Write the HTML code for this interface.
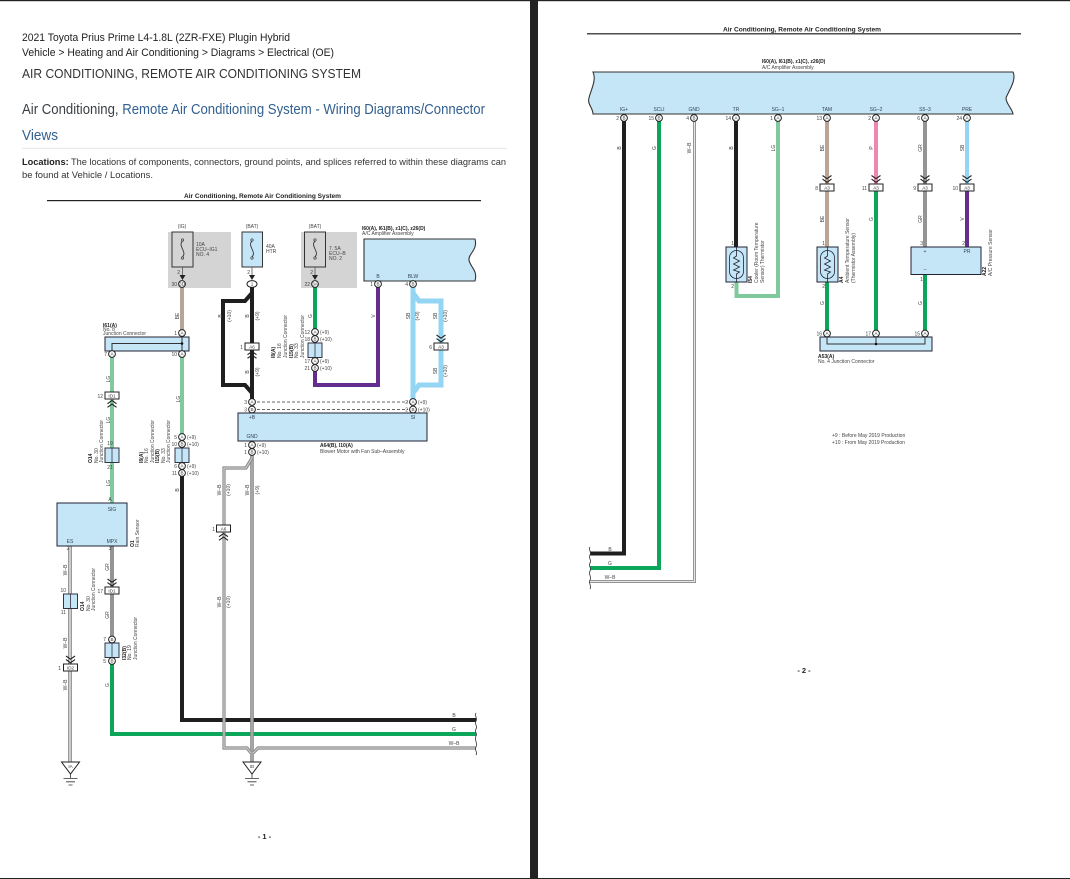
<!DOCTYPE html>
<html><head><meta charset="utf-8"><style>
html,body{margin:0;padding:0;background:#fff;width:1070px;height:879px;overflow:hidden}
svg{display:block;filter:blur(.3px)}
text{font-family:"Liberation Sans",sans-serif;fill:#444;font-size:5px}
.b{font-weight:bold;fill:#222}
.m{text-anchor:middle}
.e{text-anchor:end}
.h{fill:#222}
.w{fill:none;stroke-width:4;stroke-linejoin:miter}
.p{font-size:4.6px;text-anchor:middle;fill:#333}
.ln{fill:none;stroke:#333;stroke-width:1}
</style></head><body>
<svg width="1070" height="879" viewBox="0 0 1070 879" xmlns="http://www.w3.org/2000/svg">
<defs>
<g id="pin"><circle r="3.4" fill="#fff" stroke="#222" stroke-width="1"/></g>
<g id="cd"><path d="M-4.5,0 L0,3.2 L4.5,0 M-4.5,3.6 L0,6.8 L4.5,3.6" fill="none" stroke="#222" stroke-width="1.1"/></g>
<g id="cu"><path d="M-4.5,6.8 L0,3.6 L4.5,6.8 M-4.5,3.2 L0,0 L4.5,3.2" fill="none" stroke="#222" stroke-width="1.1"/></g>
<g id="con"><rect x="-7" y="0" width="14" height="7" fill="#fff" stroke="#222" stroke-width="1"/></g>
<g id="jbox"><rect x="-7" y="0" width="14" height="14.5" fill="#c5e6f7" stroke="#334" stroke-width="1"/><path d="M0,0V14.5" stroke="#334" stroke-width=".8"/></g>
<g id="fuse"><circle cx="0" cy="8" r="1.2" fill="none" stroke="#333" stroke-width=".7"/><circle cx="0" cy="26" r="1.2" fill="none" stroke="#333" stroke-width=".7"/><path d="M0,9 C-5,14 5,20 0,25" fill="none" stroke="#333" stroke-width=".9"/></g>
<g id="arr"><path d="M-3,0 H3 L0,5 Z" fill="#222"/></g>
<g id="gnd"><path d="M-9,0 H9 L0,12 Z" fill="#fff" stroke="#222" stroke-width="1"/><path d="M0,12V16M-7,16.5H7M-4.5,19.8H4.5M-2,23H2" fill="none" stroke="#333" stroke-width=".8"/></g>
<g id="therm"><rect x="-10.5" y="0" width="21" height="35" fill="#c5e6f7" stroke="#223" stroke-width="1"/><rect x="-7" y="3.5" width="14" height="28" rx="7" fill="none" stroke="#223" stroke-width=".8"/><path d="M0,0V9L-3,11L3,14L-3,17L3,20L-3,23L3,25L0,27V35" fill="none" stroke="#223" stroke-width=".8"/></g>
</defs>

<rect width="1070" height="879" fill="#fff"/>
<rect x="0" y="0" width="1070" height="1.2" fill="#222"/>
<rect x="530" y="0" width="8" height="879" fill="#222"/>
<rect x="0" y="878" width="1070" height="1" fill="#222"/>

<!-- header text -->
<text x="22" y="41" class="h" style="font-size:11px" textLength="268" lengthAdjust="spacingAndGlyphs">2021 Toyota Prius Prime L4-1.8L (2ZR-FXE) Plugin Hybrid</text>
<text x="22" y="56" class="h" style="font-size:11px" textLength="312" lengthAdjust="spacingAndGlyphs">Vehicle &gt; Heating and Air Conditioning &gt; Diagrams &gt; Electrical (OE)</text>
<text x="22" y="78" style="font-size:13px;fill:#333" textLength="339" lengthAdjust="spacingAndGlyphs">AIR CONDITIONING, REMOTE AIR CONDITIONING SYSTEM</text>
<text x="22" y="114" style="font-size:14.5px;fill:#3a3f45" textLength="463" lengthAdjust="spacingAndGlyphs">Air Conditioning,<tspan style="fill:#33608f"> Remote Air Conditioning System - Wiring Diagrams/Connector</tspan></text>
<text x="22" y="140" style="font-size:14.5px;fill:#33608f" textLength="36" lengthAdjust="spacingAndGlyphs">Views</text>
<rect x="22" y="147.8" width="485" height="1" fill="#e4e4e4"/>
<text x="22" y="165" style="font-size:9.5px;fill:#333" textLength="484" lengthAdjust="spacingAndGlyphs"><tspan class="b">Locations:</tspan> The locations of components, connectors, ground points, and splices referred to within these diagrams can</text>
<text x="22" y="178" style="font-size:9.5px;fill:#333" textLength="131" lengthAdjust="spacingAndGlyphs">be found at Vehicle / Locations.</text>
<text x="184" y="198" class="b" style="font-size:6.5px" textLength="157" lengthAdjust="spacingAndGlyphs">Air Conditioning, Remote Air Conditioning System</text>
<rect x="47" y="200" width="434" height="1.2" fill="#222"/>

<!-- PAGE 1 DIAGRAM -->
<rect x="168" y="232" width="63" height="56" fill="#d4d4d4"/>
<rect x="301" y="232" width="56" height="56" fill="#d4d4d4"/>
<rect x="172" y="232" width="21" height="35" fill="#d4d4d4" stroke="#333" stroke-width="1"/>
<rect x="242" y="232" width="20.5" height="35" fill="#c5e6f7" stroke="#333" stroke-width="1"/>
<rect x="304.5" y="232" width="21" height="35" fill="#d4d4d4" stroke="#333" stroke-width="1"/>
<use href="#fuse" x="182.5" y="232"/><use href="#fuse" x="252" y="232"/><use href="#fuse" x="315" y="232"/>
<path d="M182.5,267V277M252,267V277M315,267V277" stroke="#555" stroke-width=".8"/>
<use href="#arr" x="182.5" y="275"/><use href="#arr" x="252" y="275"/><use href="#arr" x="315" y="275"/>
<text x="182" y="228" class="m">(IG)</text><text x="252" y="228" class="m">(BAT)</text><text x="315" y="228" class="m">(BAT)</text>
<text x="196" y="246">10A</text><text x="196" y="251">ECU–IG1</text><text x="196" y="256">NO. 4</text>
<text x="266" y="248">40A</text><text x="266" y="253">HTR</text>
<text x="329" y="250">7. 5A</text><text x="329" y="255">ECU–B</text><text x="329" y="260">NO. 2</text>
<text x="180" y="274" class="e">2</text><text x="250" y="274" class="e">2</text><text x="313" y="274" class="e">2</text>

<text x="362" y="230" class="b">I60(A), I61(B), z1(C), z26(D)</text>
<text x="362" y="235">A/C Amplifier Assembly</text>
<path d="M364,239H475C478,250 468,254 469,260C470,267 478,270 475,281H364Z" fill="#c5e6f7" stroke="#333" stroke-width="1.1"/>
<text x="378" y="278" class="m" style="fill:#345">B</text><text x="413" y="278" class="m" style="fill:#345">BLW</text>

<!-- wires page 1 -->
<path d="M182,287V333" class="w" stroke="#b8a596"/>
<path d="M182,357V437" class="w" stroke="#7fc99c"/>
<path d="M112,357V503" class="w" stroke="#7fc99c"/>
<path d="M112,546V640" class="w" stroke="#949494"/>
<path d="M182,476V720H476" class="w" stroke="#1f1f1f"/>
<path d="M112,663V734H476" class="w" stroke="#0ca65a"/>
<path d="M252,287V400" class="w" stroke="#1f1f1f"/>
<path d="M252,293L245,301H223V385H245L252,393" class="w" stroke="#1f1f1f"/>
<path d="M315,287V331" class="w" stroke="#0ca65a"/>
<path d="M315,371V385H378V287" class="w" stroke="#652d90"/>
<path d="M413,287V400" class="w" style="stroke-width:5" stroke="#93d5f2"/>
<path d="M413,293L419,301H441V385H419L413,393" class="w" style="stroke-width:5" stroke="#93d5f2"/>

<!-- W-B wires -->
<path d="M70,546V764" fill="none" stroke="#333" stroke-width="3"/><path d="M70,546V764" fill="none" stroke="#fff" stroke-width="1.5"/>
<path d="M252,446V762" fill="none" stroke="#888" stroke-width="3.6"/><path d="M252,446V762" fill="none" stroke="#bbb" stroke-width="1.2"/>
<path d="M252,458L246,468H224V748H247L251,753M476,748H258L253,753" fill="none" stroke="#888" stroke-width="3.2"/><path d="M252,458L246,468H224V748H247L251,753M476,748H258L253,753" fill="none" stroke="#ccc" stroke-width="1.2"/>

<!-- dashed -->
<path d="M257,402H408" stroke="#333" stroke-width=".8" stroke-dasharray="3 2"/>
<path d="M257,409.5H408" stroke="#333" stroke-width=".8" stroke-dasharray="3 2"/>

<!-- boxes page 1 -->
<rect x="105" y="337" width="84" height="14" fill="#c5e6f7" stroke="#223" stroke-width="1"/>
<path d="M112,351V343.5H182" class="ln"/><path d="M182,337V351" class="ln"/><circle cx="182" cy="343.5" r="1.3" fill="#111"/>
<rect x="238" y="413" width="189" height="28" fill="#c5e6f7" stroke="#223" stroke-width="1"/>
<rect x="57" y="503" width="70" height="43" fill="#c5e6f7" stroke="#223" stroke-width="1"/>
<text x="252" y="419" class="m" style="fill:#345">+B</text><text x="413" y="419" class="m" style="fill:#345">SI</text><text x="252" y="438" class="m" style="fill:#345">GND</text>
<text x="112" y="511" class="m" style="fill:#345">SIG</text><text x="70" y="543" class="m" style="fill:#345">ES</text><text x="112" y="543" class="m" style="fill:#345">MPX</text>

<use href="#jbox" x="182" y="448"/><use href="#jbox" x="112" y="448"/><use href="#jbox" x="315" y="343"/><use href="#jbox" x="70.5" y="594"/><use href="#jbox" x="112" y="643"/>

<use href="#con" x="112" y="392"/><use href="#cu" x="112" y="400.5"/><text x="112" y="397.7" class="p">ID1</text><text x="103" y="398" class="e">12</text>
<use href="#con" x="112" y="587"/><use href="#cd" x="112" y="579"/><text x="112" y="592.7" class="p">ID1</text><text x="103" y="593" class="e">17</text>
<use href="#con" x="70.5" y="664"/><use href="#cd" x="70.5" y="656"/><text x="70.5" y="669.7" class="p">ID2</text><text x="61" y="670" class="e">1</text>
<use href="#con" x="252" y="343"/><use href="#cu" x="252" y="351.5"/><text x="252" y="348.7" class="p">A6</text><text x="243" y="349" class="e">1</text>
<use href="#con" x="223.5" y="525"/><use href="#cu" x="223.5" y="533.5"/><text x="223.5" y="530.7" class="p">A6</text><text x="215" y="531" class="e">1</text>
<use href="#con" x="441" y="343"/><use href="#cd" x="441" y="335"/><text x="441" y="348.7" class="p">A3</text><text x="432" y="349" class="e">6</text>

<!-- pins page 1 -->
<use href="#pin" x="182" y="284"/><text x="182" y="285.7" class="p">3D</text><text x="177" y="286" class="e">30</text>
<ellipse cx="252" cy="284" rx="5" ry="3.4" fill="#fff" stroke="#222"/><text x="252" y="285.7" class="p">1</text>
<use href="#pin" x="315" y="284"/><text x="315" y="285.7" class="p">3A</text><text x="310" y="286" class="e">22</text>
<use href="#pin" x="378" y="284"/><text x="378" y="285.7" class="p">B</text><text x="373" y="286" class="e">1</text>
<use href="#pin" x="413" y="284"/><text x="413" y="285.7" class="p">B</text><text x="408" y="286" class="e">4</text>
<use href="#pin" x="182" y="333"/><text x="182" y="334.7" class="p">A</text><text x="177" y="335" class="e">1</text>
<use href="#pin" x="112" y="354"/><text x="112" y="355.7" class="p">A</text><text x="107" y="356" class="e">7</text>
<use href="#pin" x="182" y="354"/><text x="182" y="355.7" class="p">A</text><text x="177" y="356" class="e">10</text>
<use href="#pin" x="182" y="437"/><text x="182" y="438.7" class="p">A</text><text x="177" y="439" class="e">5</text><text x="187" y="439">(+9)</text>
<use href="#pin" x="182" y="444"/><text x="182" y="445.7" class="p">B</text><text x="177" y="446" class="e">10</text><text x="187" y="446">(+10)</text>
<use href="#pin" x="182" y="466"/><text x="182" y="467.7" class="p">A</text><text x="177" y="468" class="e">6</text><text x="187" y="468">(+9)</text>
<use href="#pin" x="182" y="473"/><text x="182" y="474.7" class="p">B</text><text x="177" y="475" class="e">11</text><text x="187" y="475">(+10)</text>
<use href="#pin" x="315" y="332"/><text x="315" y="333.7" class="p">A</text><text x="310" y="334" class="e">12</text><text x="320" y="334">(+9)</text>
<use href="#pin" x="315" y="339"/><text x="315" y="340.7" class="p">B</text><text x="310" y="341" class="e">18</text><text x="320" y="341">(+10)</text>
<use href="#pin" x="315" y="361"/><text x="315" y="362.7" class="p">A</text><text x="310" y="363" class="e">17</text><text x="320" y="363">(+9)</text>
<use href="#pin" x="315" y="368"/><text x="315" y="369.7" class="p">B</text><text x="310" y="370" class="e">21</text><text x="320" y="370">(+10)</text>
<use href="#pin" x="252" y="402"/><text x="252" y="403.7" class="p">A</text><text x="247" y="404" class="e">3</text>
<use href="#pin" x="252" y="409.5"/><text x="252" y="411.2" class="p">B</text><text x="247" y="411.5" class="e">3</text>
<use href="#pin" x="413" y="402"/><text x="413" y="403.7" class="p">A</text><text x="408" y="404" class="e">2</text><text x="418" y="404">(+9)</text>
<use href="#pin" x="413" y="409.5"/><text x="413" y="411.2" class="p">B</text><text x="408" y="411.5" class="e">2</text><text x="418" y="411.5">(+10)</text>
<use href="#pin" x="252" y="445"/><text x="252" y="446.7" class="p">A</text><text x="247" y="447" class="e">1</text><text x="257" y="447">(+9)</text>
<use href="#pin" x="252" y="452"/><text x="252" y="453.7" class="p">B</text><text x="247" y="454" class="e">1</text><text x="257" y="454">(+10)</text>
<use href="#pin" x="112" y="639.5"/><text x="112" y="641.2" class="p">B</text><text x="106" y="641" class="e">7</text>
<use href="#pin" x="112" y="661"/><text x="112" y="662.7" class="p">B</text><text x="106" y="663" class="e">5</text>

<text x="320" y="447" class="b">A64(B), I10(A)</text><text x="320" y="453">Blower Motor with Fan Sub–Assembly</text>
<text x="103" y="327" class="b">I61(A)</text><text x="103" y="331">No. 8</text><text x="103" y="335">Junction Connector</text>

<text x="110" y="445" class="m">19</text><text x="110" y="469" class="m">21</text>
<text x="110" y="501" class="m">A</text>
<text x="68" y="550" class="m">2</text><text x="110" y="550" class="m">3</text>
<text x="66" y="592" class="e">10</text><text x="66" y="614" class="e">11</text>

<use href="#gnd" x="70.5" y="762"/><use href="#gnd" x="252" y="762"/>
<text x="70.5" y="768" class="p">IA</text><text x="252" y="768" class="p">ID</text>

<path d="M476,713C474,716 478,718 476,721C474,724 478,726 476,729C474,732 478,734 476,736C474,740 478,743 476,747C474,750 478,752 476,755" fill="none" stroke="#333" stroke-width=".8"/>
<text x="454" y="717" class="m">B</text><text x="454" y="731" class="m">G</text><text x="454" y="745" class="m">W–B</text>

<!-- rotated labels page 1 -->
<g>
<text transform="rotate(-90 179 316)" x="179" y="316" class="m">BE</text>
<text transform="rotate(-90 222 316)" x="222" y="316" class="m">B</text>
<text transform="rotate(-90 231 316)" x="231" y="316" class="m">(+10)</text>
<text transform="rotate(-90 249 316)" x="249" y="316" class="m">B</text>
<text transform="rotate(-90 259 316)" x="259" y="316" class="m">(+9)</text>
<text transform="rotate(-90 249 372)" x="249" y="372" class="m">B</text>
<text transform="rotate(-90 259 372)" x="259" y="372" class="m">(+9)</text>
<text transform="rotate(-90 410 316)" x="410" y="316" class="m">SB</text>
<text transform="rotate(-90 419 316)" x="419" y="316" class="m">(+9)</text>
<text transform="rotate(-90 437 316)" x="437" y="316" class="m">SB</text>
<text transform="rotate(-90 447 316)" x="447" y="316" class="m">(+10)</text>
<text transform="rotate(-90 437 371)" x="437" y="371" class="m">SB</text>
<text transform="rotate(-90 447 371)" x="447" y="371" class="m">(+10)</text>
<text transform="rotate(-90 375 316)" x="375" y="316" class="m">V</text>
<text transform="rotate(-90 312 316)" x="312" y="316" class="m">G</text>
<text transform="rotate(-90 180 399)" x="180" y="399" class="m">LG</text>
<text transform="rotate(-90 110 379)" x="110" y="379" class="m">LG</text>
<text transform="rotate(-90 110 420)" x="110" y="420" class="m">LG</text>
<text transform="rotate(-90 110 483)" x="110" y="483" class="m">LG</text>
<text transform="rotate(-90 179 490)" x="179" y="490" class="m">B</text>
<text transform="rotate(-90 221 490)" x="221" y="490" class="m">W–B</text>
<text transform="rotate(-90 230 490)" x="230" y="490" class="m">(+10)</text>
<text transform="rotate(-90 249 490)" x="249" y="490" class="m">W–B</text>
<text transform="rotate(-90 259 490)" x="259" y="490" class="m">(+9)</text>
<text transform="rotate(-90 221 602)" x="221" y="602" class="m">W–B</text>
<text transform="rotate(-90 230 602)" x="230" y="602" class="m">(+10)</text>
<text transform="rotate(-90 67 570)" x="67" y="570" class="m">W–B</text>
<text transform="rotate(-90 67 643)" x="67" y="643" class="m">W–B</text>
<text transform="rotate(-90 67 685)" x="67" y="685" class="m">W–B</text>
<text transform="rotate(-90 109 567)" x="109" y="567" class="m">GR</text>
<text transform="rotate(-90 109 615)" x="109" y="615" class="m">GR</text>
<text transform="rotate(-90 109 685)" x="109" y="685" class="m">G</text>

<text transform="rotate(-90 275 358)" x="275" y="358" class="b">I8(A)</text>
<text transform="rotate(-90 281 358)" x="281" y="358">No. 16</text>
<text transform="rotate(-90 287 358)" x="287" y="358">Junction Connector</text>
<text transform="rotate(-90 293 358)" x="293" y="358" class="b">I15(B)</text>
<text transform="rotate(-90 298 358)" x="298" y="358">No. 33</text>
<text transform="rotate(-90 304 358)" x="304" y="358">Junction Connector</text>

<text transform="rotate(-90 92 463)" x="92" y="463" class="b">O14</text>
<text transform="rotate(-90 98 463)" x="98" y="463">No. 30</text>
<text transform="rotate(-90 103 463)" x="103" y="463">Junction Connector</text>
<text transform="rotate(-90 143 463)" x="143" y="463" class="b">I8(A)</text>
<text transform="rotate(-90 148 463)" x="148" y="463">No. 16</text>
<text transform="rotate(-90 154 463)" x="154" y="463">Junction Connector</text>
<text transform="rotate(-90 159 463)" x="159" y="463" class="b">I15(B)</text>
<text transform="rotate(-90 165 463)" x="165" y="463">No. 33</text>
<text transform="rotate(-90 170 463)" x="170" y="463">Junction Connector</text>
<text transform="rotate(-90 134 547)" x="134" y="547" class="b">O1</text>
<text transform="rotate(-90 139 547)" x="139" y="547">Rain Sensor</text>
<text transform="rotate(-90 84 611)" x="84" y="611" class="b">O14</text>
<text transform="rotate(-90 90 611)" x="90" y="611">No. 30</text>
<text transform="rotate(-90 95 611)" x="95" y="611">Junction Connector</text>
<text transform="rotate(-90 126 660)" x="126" y="660" class="b">I32(B)</text>
<text transform="rotate(-90 131 660)" x="131" y="660">No. 19</text>
<text transform="rotate(-90 137 660)" x="137" y="660">Junction Connector</text>
</g>

<text x="264.5" y="839" class="m b" style="font-size:7.5px">- 1 -</text>

<!-- PAGE 2 -->
<text x="723" y="31.5" class="b" style="font-size:6.5px" textLength="158" lengthAdjust="spacingAndGlyphs">Air Conditioning, Remote Air Conditioning System</text>
<rect x="587" y="33.2" width="434" height="1.2" fill="#222"/>
<text x="762" y="63" class="b">I60(A), I61(B), z1(C), z26(D)</text>
<text x="762" y="69">A/C Amplifier Assembly</text>
<path d="M593,72H1013C1017,80 1008,92 1006,98C1006,104 1012,108 1013,114H593C593,108 587,104 589,98C590,92 597,80 593,72Z" fill="#c5e6f7" stroke="#333" stroke-width="1.1"/>
<text x="624" y="111" class="m" style="fill:#345">IG+</text><text x="659" y="111" class="m" style="fill:#345">SCLI</text><text x="694" y="111" class="m" style="fill:#345">GND</text><text x="736" y="111" class="m" style="fill:#345">TR</text><text x="778" y="111" class="m" style="fill:#345">SG–1</text><text x="827" y="111" class="m" style="fill:#345">TAM</text><text x="876" y="111" class="m" style="fill:#345">SG–2</text><text x="925" y="111" class="m" style="fill:#345">S5–3</text><text x="967" y="111" class="m" style="fill:#345">PRE</text>

<path d="M624,121V553.5H590" class="w" stroke="#1f1f1f"/>
<path d="M659,121V568H590" class="w" stroke="#0ca65a"/>
<path d="M694.5,121V581.5H590" fill="none" stroke="#888" stroke-width="3"/><path d="M694.5,121V581.5H590" fill="none" stroke="#e4e4e4" stroke-width="1.3"/>
<path d="M736,121V247" class="w" stroke="#1f1f1f"/>
<path d="M778,121V296H736.5V282" class="w" stroke="#7fc99c"/>
<path d="M827,121V184" class="w" stroke="#b8a596"/><path d="M827,191V247" class="w" stroke="#b8a596"/>
<path d="M876,121V184" class="w" stroke="#ee86b0"/><path d="M876,191V337" class="w" stroke="#0ca65a"/>
<path d="M925,121V184" class="w" stroke="#949494"/><path d="M925,191V247" class="w" stroke="#949494"/>
<path d="M967,121V184" class="w" stroke="#93d5f2"/><path d="M967,191V247" class="w" stroke="#652d90"/>
<path d="M827,282V337" class="w" stroke="#0ca65a"/><path d="M925,274V337" class="w" stroke="#0ca65a"/>

<use href="#therm" x="736.5" y="247"/><use href="#therm" x="827.5" y="247"/>
<rect x="911" y="247" width="70" height="27.5" fill="#c5e6f7" stroke="#223" stroke-width="1"/>
<text x="925" y="253" class="m" style="fill:#345">+</text><text x="967" y="253" class="m" style="fill:#345">PR</text><text x="925" y="271" class="m" style="fill:#345">–</text>
<rect x="820" y="337" width="112" height="14" fill="#c5e6f7" stroke="#223" stroke-width="1"/>
<path d="M827,337V344H925V337M876,337V344" class="ln"/><circle cx="876" cy="344" r="1.3" fill="#111"/>

<use href="#con" x="827" y="184"/><use href="#cd" x="827" y="175.5"/><text x="827" y="189.7" class="p">A3</text><text x="818" y="190" class="e">8</text>
<use href="#con" x="876" y="184"/><use href="#cd" x="876" y="175.5"/><text x="876" y="189.7" class="p">A3</text><text x="867" y="190" class="e">11</text>
<use href="#con" x="925" y="184"/><use href="#cd" x="925" y="175.5"/><text x="925" y="189.7" class="p">A3</text><text x="916" y="190" class="e">9</text>
<use href="#con" x="967" y="184"/><use href="#cd" x="967" y="175.5"/><text x="967" y="189.7" class="p">A3</text><text x="958" y="190" class="e">10</text>

<use href="#pin" x="624" y="118"/><text x="624" y="119.7" class="p">B</text><text x="619" y="120" class="e">2</text>
<use href="#pin" x="659" y="118"/><text x="659" y="119.7" class="p">B</text><text x="654" y="120" class="e">15</text>
<use href="#pin" x="694" y="118"/><text x="694" y="119.7" class="p">B</text><text x="689" y="120" class="e">4</text>
<use href="#pin" x="736" y="118"/><text x="736" y="119.7" class="p">A</text><text x="731" y="120" class="e">14</text>
<use href="#pin" x="778" y="118"/><text x="778" y="119.7" class="p">A</text><text x="773" y="120" class="e">1</text>
<use href="#pin" x="827" y="118"/><text x="827" y="119.7" class="p">A</text><text x="822" y="120" class="e">13</text>
<use href="#pin" x="876" y="118"/><text x="876" y="119.7" class="p">A</text><text x="871" y="120" class="e">2</text>
<use href="#pin" x="925" y="118"/><text x="925" y="119.7" class="p">A</text><text x="920" y="120" class="e">6</text>
<use href="#pin" x="967" y="118"/><text x="967" y="119.7" class="p">A</text><text x="962" y="120" class="e">24</text>
<use href="#pin" x="827" y="333.5"/><text x="827" y="335.2" class="p">A</text><text x="822" y="335.5" class="e">16</text>
<use href="#pin" x="876" y="333.5"/><text x="876" y="335.2" class="p">A</text><text x="871" y="335.5" class="e">17</text>
<use href="#pin" x="925" y="333.5"/><text x="925" y="335.2" class="p">A</text><text x="920" y="335.5" class="e">15</text>

<text x="734" y="245" class="e">1</text><text x="825" y="245" class="e">1</text><text x="923" y="245" class="e">3</text><text x="965" y="245" class="e">2</text>
<text x="734" y="288" class="e">2</text><text x="825" y="288" class="e">2</text><text x="923" y="281" class="e">1</text>

<text x="818" y="358" class="b">A53(A)</text><text x="818" y="363">No. 4 Junction Connector</text>

<g>
<text transform="rotate(-90 621 148)" x="621" y="148" class="m">B</text>
<text transform="rotate(-90 656 148)" x="656" y="148" class="m">G</text>
<text transform="rotate(-90 691 148)" x="691" y="148" class="m">W–B</text>
<text transform="rotate(-90 733 148)" x="733" y="148" class="m">B</text>
<text transform="rotate(-90 775 148)" x="775" y="148" class="m">LG</text>
<text transform="rotate(-90 824 148)" x="824" y="148" class="m">BE</text>
<text transform="rotate(-90 873 148)" x="873" y="148" class="m">P</text>
<text transform="rotate(-90 922 148)" x="922" y="148" class="m">GR</text>
<text transform="rotate(-90 964 148)" x="964" y="148" class="m">SB</text>
<text transform="rotate(-90 824 219)" x="824" y="219" class="m">BE</text>
<text transform="rotate(-90 873 219)" x="873" y="219" class="m">G</text>
<text transform="rotate(-90 922 219)" x="922" y="219" class="m">GR</text>
<text transform="rotate(-90 964 219)" x="964" y="219" class="m">V</text>
<text transform="rotate(-90 824 303)" x="824" y="303" class="m">G</text>
<text transform="rotate(-90 922 303)" x="922" y="303" class="m">G</text>
<text transform="rotate(-90 752 283)" x="752" y="283" class="b">I54</text>
<text transform="rotate(-90 758 283)" x="758" y="283">Cooler (Room Temperature</text>
<text transform="rotate(-90 764 283)" x="764" y="283">Sensor) Thermistor</text>
<text transform="rotate(-90 843 283)" x="843" y="283" class="b">A4</text>
<text transform="rotate(-90 849 283)" x="849" y="283">Ambient Temperature Sensor</text>
<text transform="rotate(-90 855 283)" x="855" y="283">(Thermistor Assembly)</text>
<text transform="rotate(-90 986 276)" x="986" y="276" class="b">A22</text>
<text transform="rotate(-90 992 276)" x="992" y="276">A/C Pressure Sensor</text>
</g>

<path d="M590,547C588,550 592,552 590,555C588,558 592,560 590,563C588,566 592,568 590,571C588,574 592,577 590,580C588,583 592,586 590,589" fill="none" stroke="#333" stroke-width=".8"/>
<text x="610" y="551" class="m">B</text><text x="610" y="565" class="m">G</text><text x="610" y="579" class="m">W–B</text>

<text x="832" y="437">+9 : Before May 2019 Production</text>
<text x="832" y="444">+10 : From May 2019 Production</text>
<text x="804" y="673" class="m b" style="font-size:7.5px">- 2 -</text>
</svg>
</body></html>
